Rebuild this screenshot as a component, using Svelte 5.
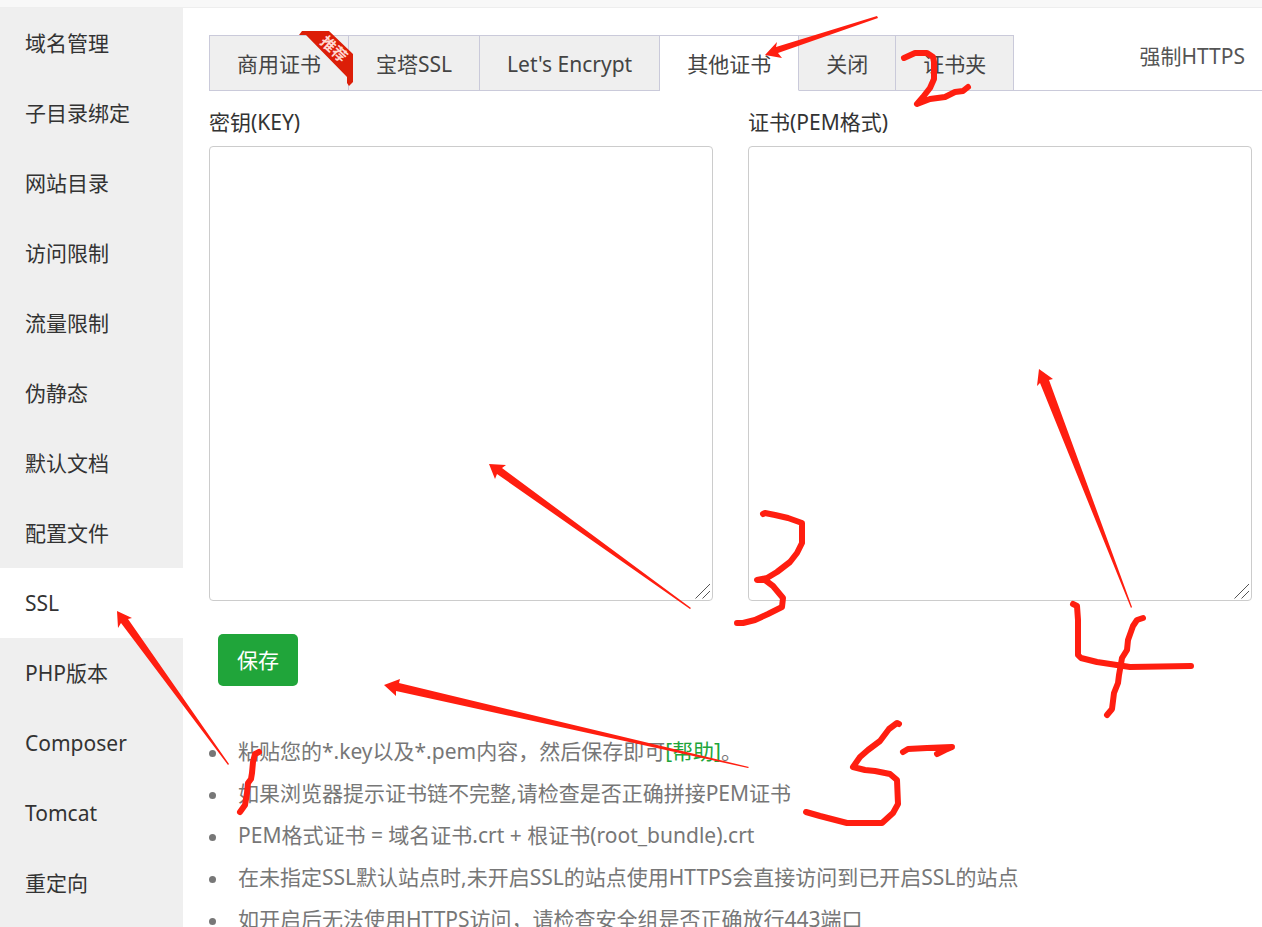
<script lang="ts">
	type Tab = {
		label: string;
		recommended?: boolean;
	};

	const menu = [
		'域名管理',
		'子目录绑定',
		'网站目录',
		'访问限制',
		'流量限制',
		'伪静态',
		'默认文档',
		'配置文件',
		'SSL',
		'PHP版本',
		'Composer',
		'Tomcat',
		'重定向'
	];

	const tabs: Tab[] = [
		{ label: '商用证书', recommended: true },
		{ label: '宝塔SSL' },
		{ label: "Let's Encrypt" },
		{ label: '其他证书' },
		{ label: '关闭' },
		{ label: '证书夹' }
	];

	// tapered arrows, tip first
	const arrows = [
		'765,55 777,42 776,47 877,16 878,18 778,53 782,58',
		'117,611 132,618 128,619 229,764 228,765 121,623 118,628',
		'489,464 506,465 502,468 691,608 690,609 497,474 495,479',
		'1039,369 1053,379 1049,380 1132,607 1131,608 1040,383 1037,386',
		'384,685 400,679 399,683 749,767 748,768 396,691 396,696'
	];

	// freehand pen strokes
	const strokes = [
		'259,752 255,754 253,762 252,773 251,779 248,783 247,793 245,805 240,812',
		'904,58 915,53 927,53 933,57 934,62 934,79 930,88 923,97 917,104 930,99 945,97 955,92 963,91 968,87',
		'763,514 765,513 775,515 788,518 802,523 802,543 797,553 790,562 777,572 767,578 757,580 765,580 773,586 783,598 782,607 768,614 755,620 743,623 737,623',
		'1073,604 1077,606 1078,620 1078,655 1081,658 1097,662 1130,667 1191,666',
		'1143,618 1137,620 1133,626 1128,640 1127,650 1122,658 1119,675 1118,683 1114,693 1112,709 1107,715',
		'899,724 897,723 889,729 880,741 868,750 860,757 853,767 865,770 875,771 890,774 897,780 898,804 893,813 882,823 847,823 820,816 806,812',
		'903,752 908,749 927,748 952,747 945,750 937,754'
	];

	let activeMenu = $state('SSL');
	let activeTab = $state('其他证书');
	let key = $state('');
	let pem = $state('');
</script>

{#snippet grip()}
	<svg class="grip" width="16" height="16" viewBox="0 0 16 16" aria-hidden="true">
		<path d="M0.5 15.5 15 1M7.5 15.5 15 8" stroke="#555" fill="none" />
	</svg>
{/snippet}

<div class="page">
	<div class="titlebar"></div>
	<div class="body">
		<nav class="menu">
			{#each menu as item}
				<button class:current={item === activeMenu} onclick={() => (activeMenu = item)}>{item}</button>
			{/each}
		</nav>

		<main>
			<div class="tabbar">
				<div class="tabs" role="tablist">
					{#each tabs as tab}
						<button
							class="tab"
							class:active={tab.label === activeTab}
							role="tab"
							aria-selected={tab.label === activeTab}
							onclick={() => (activeTab = tab.label)}
						>
							{tab.label}
							{#if tab.recommended}
								<svg class="ribbon" width="56" height="56" viewBox="0 0 56 56">
									<path d="M1 5 4 1H31L55 24V52L51 56 49 53V47L8 5Z" fill="#dc1e08" />
									<text x="35" y="24" transform="rotate(43 35 20)">推荐</text>
								</svg>
							{/if}
						</button>
					{/each}
				</div>
				<span class="force">强制HTTPS</span>
			</div>

			<div class="certs">
				<div class="field">
					<label for="key">密钥(KEY)</label>
					<div class="area">
						<textarea id="key" bind:value={key}></textarea>
						{@render grip()}
					</div>
				</div>
				<div class="field">
					<label for="pem">证书(PEM格式)</label>
					<div class="area">
						<textarea id="pem" bind:value={pem}></textarea>
						{@render grip()}
					</div>
				</div>
			</div>

			<button class="save">保存</button>

			<ul class="help">
				<li>粘贴您的*.key以及*.pem内容，然后保存即可<a href="#help">[帮助]</a>。</li>
				<li>如果浏览器提示证书链不完整,请检查是否正确拼接PEM证书</li>
				<li>PEM格式证书 = 域名证书.crt + 根证书(root_bundle).crt</li>
				<li>在未指定SSL默认站点时,未开启SSL的站点使用HTTPS会直接访问到已开启SSL的站点</li>
				<li>如开启后无法使用HTTPS访问，请检查安全组是否正确放行443端口</li>
			</ul>
		</main>
	</div>

	<svg class="marks" width="1262" height="927" viewBox="0 0 1262 927" aria-hidden="true">
		{#each arrows as points}
			<polygon {points} />
		{/each}
		{#each strokes as points}
			<polyline {points} />
		{/each}
	</svg>
</div>

<style>
	:global(body) {
		margin: 0;
	}

	.page {
		position: relative;
		display: flex;
		flex-direction: column;
		height: 100vh;
		overflow: hidden;
		background: #fff;
		color: #333;
		font-family: 'Noto Sans', 'Noto Sans CJK SC', sans-serif;
		font-size: 21px;
		line-height: 30px;
	}

	button {
		border: 0;
		font: inherit;
		color: inherit;
		cursor: pointer;
	}

	.titlebar {
		flex: none;
		height: 7px;
		background: #f8f8f8;
		border-bottom: 1px solid #eee;
	}

	.body {
		display: flex;
		flex: 1;
		min-height: 0;
	}

	.menu {
		display: flex;
		flex-direction: column;
		flex: none;
		width: 183px;
		background: #efefef;
	}

	.menu button {
		flex: none;
		height: 70px;
		padding: 0 25px;
		background: none;
		text-align: left;
	}

	.menu .current {
		background: #fff;
	}

	main {
		flex: 1;
		min-width: 0;
		padding: 27px 0 0 26px;
	}

	.tabbar {
		display: flex;
		justify-content: space-between;
		border-bottom: 1px solid #cacada;
	}

	.tabs {
		display: flex;
		margin-bottom: -1px;
		border-left: 1px solid #cacada;
	}

	.tab {
		position: relative;
		height: 56px;
		padding: 2px 27px 0;
		background: #efefef;
		border: solid #cacada;
		border-width: 1px 1px 1px 0;
		color: #444;
		white-space: nowrap;
	}

	.tab.active {
		background: #fff;
		border-bottom-color: #fff;
	}

	.ribbon {
		position: absolute;
		z-index: 1;
		top: -6px;
		right: -6px;
	}

	.ribbon text {
		fill: #ffd9d2;
		font-size: 15px;
		font-weight: 700;
		text-anchor: middle;
	}

	.force {
		padding: 6px 17px 0 0;
		color: #555;
	}

	.certs {
		display: flex;
		gap: 35px;
		padding: 16px 10px 0 0;
	}

	.field {
		flex: 1;
		display: flex;
		flex-direction: column;
		gap: 9px;
	}

	.area {
		position: relative;
		display: flex;
	}

	textarea {
		box-sizing: border-box;
		width: 100%;
		height: 455px;
		padding: 8px;
		border: 1px solid #ccc;
		border-radius: 4px;
		font: inherit;
		resize: none;
	}

	.grip {
		position: absolute;
		right: 2px;
		bottom: 2px;
		pointer-events: none;
	}

	.save {
		display: block;
		height: 52px;
		margin: 33px 0 0 9px;
		padding: 0 19px;
		background: #20a53a;
		border-radius: 5px;
		color: #fff;
	}

	.help {
		margin: 44px 0 0;
		padding: 0;
		color: #777;
		line-height: 42px;
		list-style: none;
	}

	.help li::before {
		content: '';
		display: inline-block;
		width: 7px;
		height: 7px;
		margin-right: 22px;
		border-radius: 50%;
		background: #777;
		vertical-align: middle;
	}

	.help a {
		color: #20a53a;
		text-decoration: none;
	}

	.marks {
		position: absolute;
		z-index: 2;
		top: 0;
		left: 0;
		pointer-events: none;
		fill: #ff1e10;
	}

	.marks polyline {
		fill: none;
		stroke: #ff1e10;
		stroke-width: 6;
		stroke-linecap: round;
		stroke-linejoin: round;
	}
</style>
